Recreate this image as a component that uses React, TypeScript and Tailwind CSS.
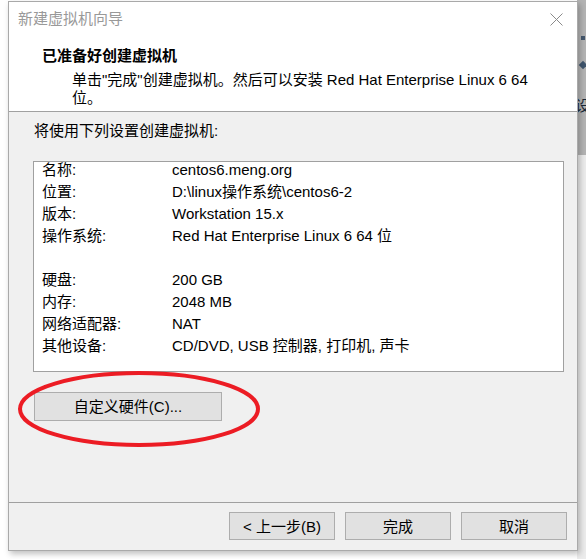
import React from "react";

const font = {
  fontFamily: '"Liberation Sans", "Noto Sans CJK SC", sans-serif',
};

const rows: [string, string][] = [
  ["名称:", "centos6.meng.org"],
  ["位置:", "D:\\linux操作系统\\centos6-2"],
  ["版本:", "Workstation 15.x"],
  ["操作系统:", "Red Hat Enterprise Linux 6 64 位"],
  ["", ""],
  ["硬盘:", "200 GB"],
  ["内存:", "2048 MB"],
  ["网络适配器:", "NAT"],
  ["其他设备:", "CD/DVD, USB 控制器, 打印机, 声卡"],
];

const WizButton: React.FC<{ label: string; className?: string }> = ({
  label,
  className = "",
}) => (
  <button
    className={`h-[28px] bg-[#e1e1e1] border border-[#adadad] text-[15px] leading-none text-black ${className}`}
  >
    {label}
  </button>
);

export default function App() {
  return (
    <div
      className="relative w-[586px] h-[559px] bg-white overflow-hidden"
      style={font}
    >
      {/* desktop peeking out on the right */}
      <div className="absolute right-0 top-0 w-[9px] h-[155px] bg-[#b4b4b4]">
        <div className="absolute left-[4px] top-[36px] w-[4px] h-[4px] bg-[#45586e]" />
        <div className="absolute left-[3px] top-[62px] w-[6px] h-[6px] rotate-45 bg-[#3f556d]" />
        <div className="absolute left-[-2px] top-[98px] text-[15px] leading-none text-[#1b2a3a]">
          设
        </div>
      </div>
      <div className="absolute right-0 top-[155px] w-[9px] h-[404px] bg-[#ececec]" />

      {/* wizard window */}
      <div className="relative ml-[8px] mt-px w-[570px] h-[550px] border border-[#a9a9a9] bg-[#f0f0f0] flex flex-col shadow-[2px_3px_6px_rgba(0,0,0,0.25)]">
        {/* header */}
        <div className="h-[110px] bg-white border-b border-[#a0a0a0] shrink-0">
          <div className="h-[34px] flex items-center justify-between pl-[9px] pr-[14px]">
            <span className="text-[15px] text-[#999999]">新建虚拟机向导</span>
            <svg width="13" height="13" viewBox="0 0 13 13">
              <path
                d="M0.5 0.5 L12.5 12.5 M12.5 0.5 L0.5 12.5"
                stroke="#8a8a8a"
                strokeWidth="1"
              />
            </svg>
          </div>
          <div className="pl-[33px] mt-[10px] text-[15px] font-bold leading-[20px] text-black">
            已准备好创建虚拟机
          </div>
          <div className="pl-[63px] mt-[4px] text-[15px] leading-[19px] text-black">
            <div className="whitespace-nowrap">
              单击"完成"创建虚拟机。然后可以安装 Red Hat Enterprise Linux 6 64
            </div>
            <div className="-mt-px">位。</div>
          </div>
        </div>

        {/* body */}
        <div className="flex-1 flex flex-col pl-[24px] pr-[13px]">
          <div className="mt-[9px] pl-px text-[15px] leading-[20px] text-black">
            将使用下列设置创建虚拟机:
          </div>
          <div className="mt-[20px] h-[211px] bg-white border border-[#a0a0a0] pl-[8px] pt-px flex flex-col gap-[9px]">
            {rows.map(([k, v], i) => (
              <div
                key={i}
                className="flex h-[13px] text-[15px] leading-[13px] text-black"
              >
                <span className="w-[130px] shrink-0">{k}</span>
                <span className="whitespace-nowrap">{v}</span>
              </div>
            ))}
          </div>
          <div className="mt-[20px] pl-px">
            <WizButton label="自定义硬件(C)..." className="w-[188px] h-[29px]" />
          </div>
        </div>

        {/* footer */}
        <div className="h-[48px] border-t border-[#a0a0a0] flex justify-end items-start pt-[9px] pr-[10px] gap-[10px] shrink-0">
          <WizButton label="< 上一步(B)" className="w-[106px]" />
          <WizButton label="完成" className="w-[106px]" />
          <WizButton label="取消" className="w-[106px]" />
        </div>

        {/* red annotation ellipse */}
        <svg
          className="absolute left-[8px] top-[367px] pointer-events-none"
          width="246"
          height="80"
          viewBox="0 0 246 80"
        >
          <ellipse
            cx="122"
            cy="40"
            rx="119"
            ry="36"
            fill="none"
            stroke="#ec1c24"
            strokeWidth="4"
          />
        </svg>
      </div>
    </div>
  );
}
